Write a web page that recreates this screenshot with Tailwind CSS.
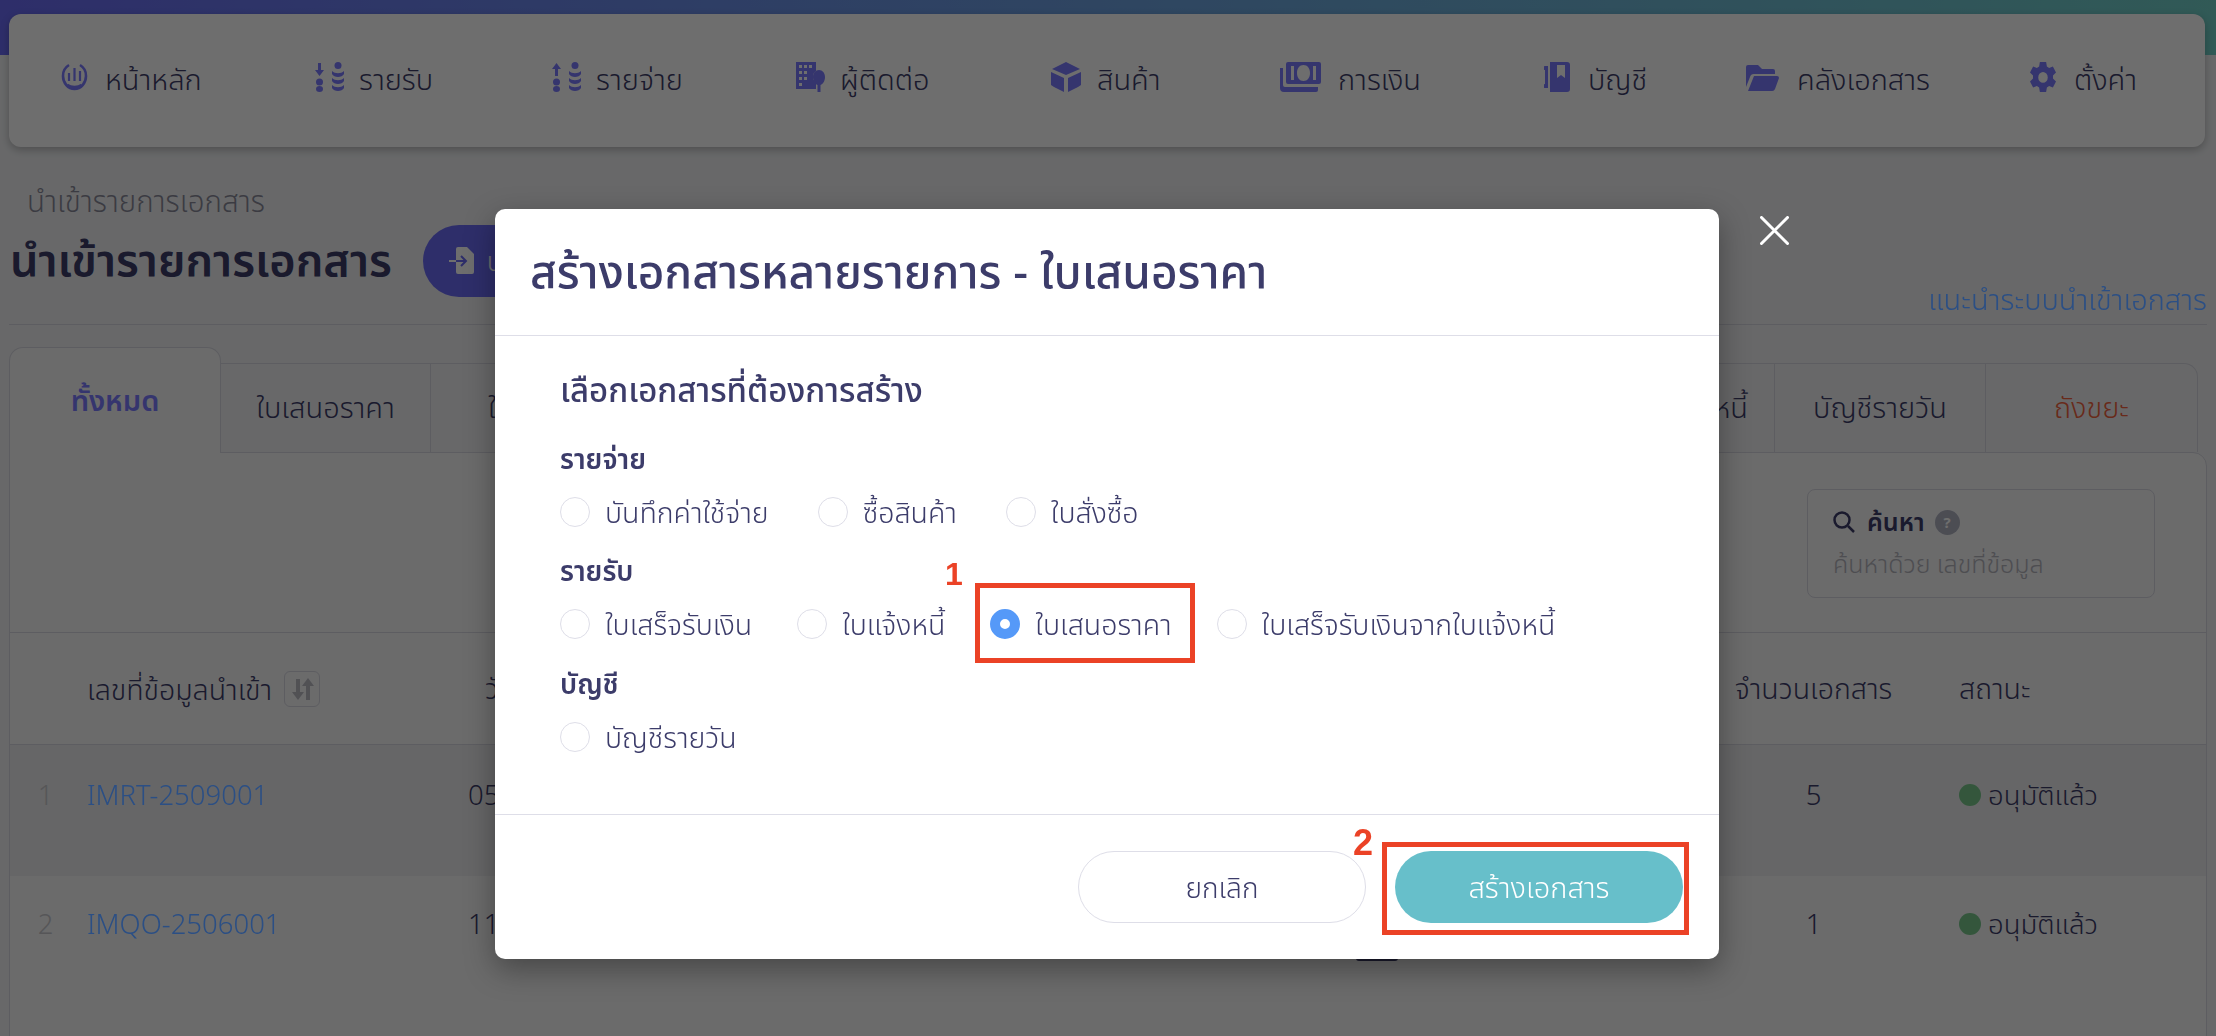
<!DOCTYPE html>
<html lang="th">
<head>
  <meta charset="UTF-8">
  <title>นำเข้ารายการเอกสาร</title>
  <script src="https://cdn.jsdelivr.net/npm/@tailwindcss/browser@4"></script>
</head>
<body class="h-[1036px] overflow-hidden bg-[#f1f2f4] text-[#3c3c6a] font-[350] [font-family:'Noto_Sans','Noto_Sans_Thai','Open_Sans',sans-serif]">
  <!-- Header -->
  <div class="h-[55px] bg-gradient-to-r from-[#6b6bf5] to-[#72d0c8]"></div>

  <!-- Nav -->
  <nav class="ml-[9px] mr-[11px] mt-[-41px] h-[133px] rounded-[12px] bg-white shadow-[0_3px_8px_rgba(0,0,0,0.25)] relative grid grid-cols-[254px_237px_245px_255px_229px_264px_202px_284px_auto] items-start pt-[47px] pl-[51px] text-[29px] leading-[36px]">
    <a class="flex items-center gap-[16px]">
      <svg class="w-[29px] h-[30px] mb-[5px]" viewBox="0 0 29 30" fill="none" stroke="#7b7bff" stroke-width="2.6"><path d="M9 3a12.500 12.500 0 0 0-6 11c0 7 5 13 11.500 13s11.500-6 11.500-13a12.500 12.500 0 0 0-6-11"/><path d="M9 11v8M14.500 6v13M20 9v10" stroke-width="2.200"/><path d="M7 23c4 3 11 3 15 0" stroke-width="3"/></svg>
      <span>หน้าหลัก</span>
    </a>
    <a class="flex items-center gap-[15px]">
      <svg class="w-[30px] h-[30px] mb-[5px]" viewBox="0 0 30 30" fill="#7b7bff"><path d="M4 1h3v7h3l-4.500 6L1 8h3z"/><circle cx="5.500" cy="20" r="3.500"/><ellipse cx="5.500" cy="27" rx="3.500" ry="3"/><circle cx="24" cy="3.500" r="3.500"/><path d="M18 9c3 3 9 3 12 0v3c-2 4-10 4-12 0zM18 16c3 3 9 3 12 0v3c-2 4-10 4-12 0zM18 23c3 3 9 3 12 0v3c-2 4-10 4-12 0z"/></svg>
      <span>รายรับ</span>
    </a>
    <a class="flex items-center gap-[15px]">
      <svg class="w-[30px] h-[30px] mb-[5px]" viewBox="0 0 30 30" fill="#7b7bff"><path d="M4 14h3V7h3L5.500 1 1 7h3z"/><circle cx="5.500" cy="20" r="3.500"/><ellipse cx="5.500" cy="27" rx="3.500" ry="3"/><circle cx="24" cy="3.500" r="3.500"/><path d="M18 9c3 3 9 3 12 0v3c-2 4-10 4-12 0zM18 16c3 3 9 3 12 0v3c-2 4-10 4-12 0zM18 23c3 3 9 3 12 0v3c-2 4-10 4-12 0z"/></svg>
      <span>รายจ่าย</span>
    </a>
    <a class="flex items-center gap-[14px]">
      <svg class="w-[30px] h-[30px] mb-[5px]" viewBox="0 0 30 30" fill="#7b7bff"><path fill-rule="evenodd" d="M0 0h20v9a7 7 0 0 0-3 6v2l3 4v6H0zM3 3v3h3V3zm5 0v3h3V3zm5 0v3h3V3zM3 9v3h3V9zm5 0v3h3V9zm-5 6v3h3v-3zm5 0v3h3v-3zM3 21v3h3v-3z"/><path d="M23 8c3.500 0 6 3 6 7s-2 7-4.500 8v7h-3v-7C19 22 17 19 17 15s2.500-7 6-7z"/></svg>
      <span>ผู้ติดต่อ</span>
    </a>
    <a class="flex items-center gap-[16px]">
      <svg class="w-[30px] h-[30px] mb-[5px]" viewBox="0 0 30 30" fill="#7b7bff"><path d="M15 0 29 7 15 13 1 7zM0 10l13 6v14L3 25l-3-2zM30 10l-13 6v14l10-5 3-2z"/></svg>
      <span>สินค้า</span>
    </a>
    <a class="flex items-center gap-[17px]">
      <svg class="w-[41px] h-[30px] mb-[5px]" viewBox="0 0 41 30" fill="#7b7bff"><path fill-rule="evenodd" d="M8 0h31a2 2 0 0 1 2 2v18a2 2 0 0 1-2 2H8a2 2 0 0 1-2-2V2a2 2 0 0 1 2-2zm15.500 3C19.500 3 17 6.500 17 11s2.500 8 6.500 8 6.500-3.500 6.500-8-2.500-8-6.500-8zM11 4v14h3V4zm22 0v14h3V4z"/><path d="M0 6h3v17a2 2 0 0 0 2 2h33v3a2 2 0 0 1-2 2H4a4 4 0 0 1-4-4z"/></svg>
      <span>การเงิน</span>
    </a>
    <a class="flex items-center gap-[18px]">
      <svg class="w-[26px] h-[30px] mb-[5px]" viewBox="0 0 26 30" fill="#7b7bff"><path fill-rule="evenodd" d="M6 0h17a3 3 0 0 1 3 3v24a3 3 0 0 1-3 3H6zm7 3v13l4-3 4 3V3z"/><path d="M1 4h3v22H1a1 1 0 0 1 0-4V8a1 1 0 0 1 0-4z"/></svg>
      <span>บัญชี</span>
    </a>
    <a class="flex items-center gap-[18px]">
      <svg class="w-[33px] h-[30px] mb-[5px]" viewBox="0 0 33 30" fill="#7b7bff"><path d="M2 3h10l4 4h11a2 2 0 0 1 2 2v3H8a4 4 0 0 0-4 3L0 25V5a2 2 0 0 1 2-2z"/><path d="M8 14h23a2 2 0 0 1 2 2l-4 11a3 3 0 0 1-3 2H2z"/></svg>
      <span>คลังเอกสาร</span>
    </a>
    <a class="flex items-center gap-[18px]">
      <svg class="w-[26px] h-[30px] mb-[5px]" viewBox="1.600 0 20.800 21" preserveAspectRatio="none" fill="#7b7bff"><path fill-rule="evenodd" d="M9.500 0h5l.6 3.200 1.800 1 3-1.100 2.500 4.300-2.400 2.100v2l2.400 2.100-2.500 4.300-3-1.100-1.800 1-.6 3.200h-5l-.6-3.200-1.800-1-3 1.100L1.600 13.600 4 11.500v-2L1.600 7.400 4.100 3.100l3 1.100 1.800-1zM12 7a3.800 3.800 0 1 0 0 7.600A3.800 3.800 0 0 0 12 7z"/></svg>
      <span>ตั้งค่า</span>
    </a>
  </nav>

  <!-- Page content -->
  <main class="px-[9px]">
    <p class="mt-[37px] pl-[18px] text-[29.500px] leading-[34px] text-[#8a8a9a]">นำเข้ารายการเอกสาร</p>

    <div class="mt-[7px] h-[100px] border-b border-[#d8d8e0] flex items-start justify-between">
      <div class="flex items-center h-[72px] gap-[31px] pl-[1px]">
        <h1 class="text-[45px] leading-[56px] font-semibold mb-[5px]">นำเข้ารายการเอกสาร</h1>
        <button class="w-[300px] h-[72px] rounded-full bg-[#6b6bf5] pl-[26px] flex items-center gap-[12px] text-white text-[27px]">
          <svg class="w-[26px] h-[30px]" viewBox="0 0 26 30" fill="none"><path d="M7 9V3a2 2 0 0 1 2-2h9l7 7v18a2 2 0 0 1-2 2H9a2 2 0 0 1-2-2v-6" fill="#fff"/><path d="M0 15h17M12 10l5 5-5 5" stroke="#6b6bf5" stroke-width="2"/><path d="M0 15h7" stroke="#fff" stroke-width="2"/></svg>
          <span>นำเข้า</span>
        </button>
      </div>
      <a class="relative z-30 mt-[56px] text-[29px] leading-[36px] text-[#2b4f85]">แนะนำระบบนำเข้าเอกสาร</a>
    </div>

    <!-- Tabs -->
    <div class="mt-[22px] flex items-end pr-[9px] text-[29px] relative z-10">
      <div class="w-[212px] h-[106px] rounded-t-[14px] border border-b-0 border-[#d8d8e0] bg-[#f7f7f9] text-[#7b7bff] font-semibold text-center pt-[34px] leading-[36px] mb-[-1px]">ทั้งหมด</div>
      <div class="w-[210px] h-[89px] border-t border-r border-[#d8d8e0] flex items-center justify-center pb-[3px]">ใบเสนอราคา</div>
      <div class="w-[240px] h-[89px] border-t border-r border-[#d8d8e0] flex items-center pl-[57px] pb-[3px]">ใบแจ้งหนี้</div>
      <div class="flex-1 h-[89px] border-t border-[#d8d8e0]"></div>
      <div class="w-[180px] h-[89px] border-t border-r border-[#d8d8e0] flex items-center justify-end pr-[26px] pb-[3px]">ใบแจ้งหนี้</div>
      <div class="w-[211px] h-[89px] border-t border-r border-[#d8d8e0] flex items-center justify-center pb-[3px]">บัญชีรายวัน</div>
      <div class="w-[212px] h-[89px] border-t border-r border-[#d8d8e0] rounded-tr-[14px] text-[#f2633f] flex items-center justify-center pb-[3px]">ถังขยะ</div>
    </div>

    <!-- Panel -->
    <section class="border border-[#d8d8e0] rounded-tr-[14px] bg-[#f7f7f9] h-[600px]">
      <div class="h-[180px] border-b border-[#d8d8e0] flex justify-end pt-[36px] pr-[51px]">
        <div class="w-[348px] h-[109px] border border-[#d8d8e0] rounded-[8px] pl-[25px] pt-[13px]">
          <div class="flex items-center h-[38px]">
            <svg class="w-[22px] h-[22px]" viewBox="0 0 22 22" fill="none" stroke="#3c3c6a" stroke-width="2.500"><circle cx="9" cy="9" r="7.500"/><path d="m15 15 6 6"/></svg>
            <span class="ml-[12px] text-[25px] font-semibold">ค้นหา</span>
            <span class="ml-[10px] w-[25px] h-[25px] rounded-full bg-[#b0b2c0] text-white text-[15px] font-bold flex items-center justify-center">?</span>
          </div>
          <div class="mt-[5px] text-[25px] leading-[34px] text-[#b4b4bc]">ค้นหาด้วย เลขที่ข้อมูล</div>
        </div>
      </div>

      <!-- Table -->
      <div class="h-[112px] border-b border-[#d8d8e0] grid grid-cols-[77px_381px_1fr_161px_312px] items-start pt-[38px] text-[28.500px] leading-[34px]">
        <div></div>
        <div class="flex items-center gap-[12px]">
          <span>เลขที่ข้อมูลนำเข้า</span>
          <span class="w-[36px] h-[36px] rounded-[6px] border border-[#d8d8e0] flex items-center justify-center">
            <svg class="w-[26px] h-[26px]" viewBox="0 0 26 26" fill="#bdbdc4"><path d="M7 3h4v13h4l-6 8-6-8h4zM17 24V10h-4l6-8 6 8h-4v14z"/></svg>
          </span>
        </div>
        <div class="pl-[17px]">วันที่</div>
        <div class="text-center whitespace-nowrap">จำนวนเอกสาร</div>
        <div class="pl-[65px]">สถานะ</div>
      </div>

      <div class="h-[131px] bg-[#ededee] grid grid-cols-[77px_381px_1fr_161px_312px] items-start pt-[33px] text-[27.500px] leading-[34px]">
        <div class="text-center pr-[6px] text-[#c8c8cc]">1</div>
        <a class="relative z-30 text-[#2b4f85]">IMRT-2509001</a>
        <div>05/09/2568</div>
        <div class="text-center">5</div>
        <div class="pl-[65px] flex items-center gap-[7px]"><span class="w-[22px] h-[22px] rounded-full bg-[#78c88c]"></span>อนุมัติแล้ว</div>
      </div>
      <div class="h-[131px] grid grid-cols-[77px_381px_1fr_161px_312px] items-start pt-[31px] text-[27.500px] leading-[34px] relative">
        <div class="text-center pr-[6px] text-[#c8c8cc]">2</div>
        <a class="relative z-30 text-[#2b4f85]">IMQO-2506001</a>
        <div>11/06/2568</div>
        <div class="text-center">1</div>
        <div class="pl-[65px] flex items-center gap-[7px]"><span class="w-[22px] h-[22px] rounded-full bg-[#78c88c]"></span>อนุมัติแล้ว</div>
        <span class="absolute left-[1346px] top-[70px] w-[42px] h-[15px] rounded-[3px] bg-[#3c3c6a]"></span>
      </div>
    </section>
  </main>

  <!-- Overlay -->
  <div class="fixed inset-0 bg-black/[0.57] z-20"></div>

  <!-- Close -->
  <button class="fixed left-[1760px] top-[216px] w-[29px] h-[29px] z-30">
    <svg class="w-full h-full" viewBox="0 0 29 29" fill="none" stroke="#fff" stroke-width="3" stroke-linecap="round"><path d="M1.500 1.500l26 26M27.500 1.500l-26 26"/></svg>
  </button>

  <!-- Modal -->
  <div class="fixed left-[495px] top-[209px] w-[1224px] h-[750px] bg-white rounded-[10px] shadow-[0_10px_30px_rgba(0,0,0,0.35)] z-30 flex flex-col">
    <div class="h-[127px] border-b border-[#dedee8] pl-[35px] pt-[33px]">
      <h2 class="text-[46px] leading-[56px] font-medium">สร้างเอกสารหลายรายการ - ใบเสนอราคา</h2>
    </div>
    <div class="flex-1 pl-[65px] relative">
      <h3 class="mt-[34px] text-[33px] leading-[40px] font-medium">เลือกเอกสารที่ต้องการสร้าง</h3>

      <h4 class="mt-[31px] text-[27.500px] leading-[36px] font-semibold">รายจ่าย</h4>
      <div class="mt-[17px] flex items-center gap-[49px] text-[28.500px] leading-[36px]">
        <label class="flex items-center gap-[15px]"><span class="w-[30px] h-[30px] rounded-full border border-[#dedee8]"></span>บันทึกค่าใช้จ่าย</label>
        <label class="flex items-center gap-[15px]"><span class="w-[30px] h-[30px] rounded-full border border-[#dedee8]"></span>ซื้อสินค้า</label>
        <label class="flex items-center gap-[15px]"><span class="w-[30px] h-[30px] rounded-full border border-[#dedee8]"></span>ใบสั่งซื้อ</label>
      </div>

      <h4 class="mt-[23px] text-[27.500px] leading-[36px] font-semibold">รายรับ</h4>
      <div class="mt-[17px] flex items-center gap-[45px] text-[28.500px] leading-[36px]">
        <label class="flex items-center gap-[15px]"><span class="w-[30px] h-[30px] rounded-full border border-[#dedee8]"></span>ใบเสร็จรับเงิน</label>
        <label class="flex items-center gap-[15px]"><span class="w-[30px] h-[30px] rounded-full border border-[#dedee8]"></span>ใบแจ้งหนี้</label>
        <label class="flex items-center gap-[15px]"><span class="w-[30px] h-[30px] rounded-full border-[10px] border-[#5599f8]"></span>ใบเสนอราคา</label>
        <label class="flex items-center gap-[15px]"><span class="w-[30px] h-[30px] rounded-full border border-[#dedee8]"></span>ใบเสร็จรับเงินจากใบแจ้งหนี้</label>
      </div>

      <h4 class="mt-[24px] text-[27.500px] leading-[36px] font-semibold">บัญชี</h4>
      <div class="mt-[17px] flex items-center gap-[47px] text-[28.500px] leading-[36px]">
        <label class="flex items-center gap-[15px]"><span class="w-[30px] h-[30px] rounded-full border border-[#dedee8]"></span>บัญชีรายวัน</label>
      </div>

      <!-- Annotation 1 -->
      <span class="absolute left-[450px] top-[220px] text-[32px] leading-[36px] font-bold text-[#eb4226] [font-family:'Liberation_Sans',sans-serif]">1</span>
      <div class="absolute left-[480px] top-[247px] w-[220px] h-[80px] border-[5px] border-[#eb4226]"></div>
    </div>
    <div class="h-[145px] border-t border-[#dedee8] flex justify-end gap-[29px] pt-[36px] pr-[36px] relative">
      <button class="w-[288px] h-[72px] rounded-full border border-[#dedee8] text-[28px]">ยกเลิก</button>
      <button class="w-[288px] h-[72px] rounded-full bg-[#67bfca] text-white text-[29px]">สร้างเอกสาร</button>
      <!-- Annotation 2 -->
      <span class="absolute left-[858px] top-[8px] text-[36px] leading-[40px] font-bold text-[#eb4226] [font-family:'Liberation_Sans',sans-serif]">2</span>
      <div class="absolute left-[887px] top-[27px] w-[307px] h-[93px] border-[5px] border-[#eb4226]"></div>
    </div>
  </div>
</body>
</html>
